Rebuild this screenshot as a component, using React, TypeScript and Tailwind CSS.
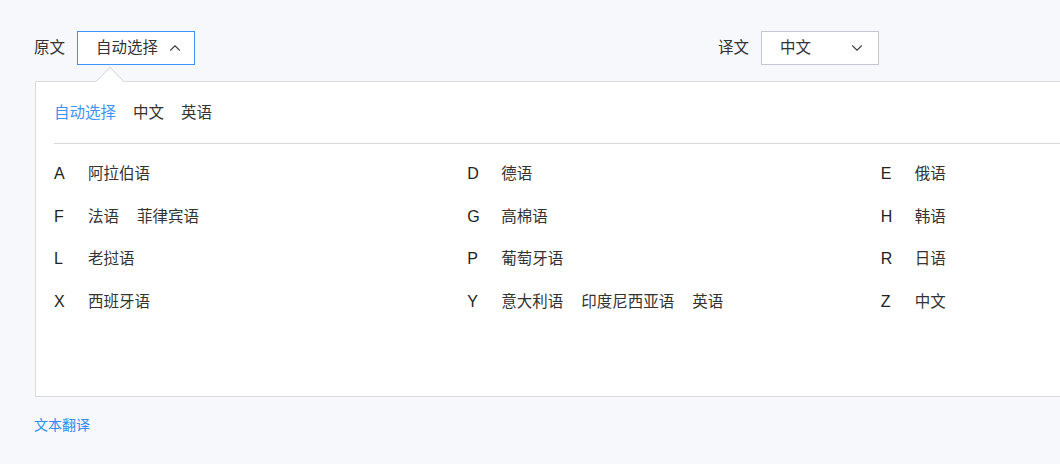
import { ChevronDown, ChevronUp } from 'lucide-react';

interface Group {
  letter: string;
  langs: string[];
}

const rows: Group[][] = [
  [
    { letter: 'A', langs: ['阿拉伯语'] },
    { letter: 'D', langs: ['德语'] },
    { letter: 'E', langs: ['俄语'] },
  ],
  [
    { letter: 'F', langs: ['法语', '菲律宾语'] },
    { letter: 'G', langs: ['高棉语'] },
    { letter: 'H', langs: ['韩语'] },
  ],
  [
    { letter: 'L', langs: ['老挝语'] },
    { letter: 'P', langs: ['葡萄牙语'] },
    { letter: 'R', langs: ['日语'] },
  ],
  [
    { letter: 'X', langs: ['西班牙语'] },
    { letter: 'Y', langs: ['意大利语', '印度尼西亚语', '英语'] },
    { letter: 'Z', langs: ['中文'] },
  ],
];

function LetterGroup({ letter, langs }: Group) {
  return (
    <div className="flex h-[42.5px] items-center">
      <span className="w-[34px] text-[16px] text-[#222]">{letter}</span>
      <div className="flex gap-[18px]">
        {langs.map((l) => (
          <span key={l} className="cursor-pointer text-[#333]">
            {l}
          </span>
        ))}
      </div>
    </div>
  );
}

export default function App() {
  return (
    <div
      className="h-[464px] w-[1060px] overflow-hidden bg-[#f7f8fc] pl-[34px] pt-[31px] text-[15.5px] leading-5"
      style={{ fontFamily: '"Liberation Sans", "Noto Sans CJK SC", sans-serif' }}
    >
      <div className="flex items-center">
        <span className="mr-[12px] text-[#333]">原文</span>
        <button className="flex h-[34px] w-[118px] items-center justify-between border border-[#3d94f6] bg-white pl-[18px] pr-[10px] text-[#333]">
          <span>自动选择</span>
          <ChevronUp size={18} strokeWidth={1.5} className="text-[#444]" />
        </button>
        <span className="ml-[523px] mr-[12px] text-[#333]">译文</span>
        <button className="flex h-[34px] w-[118px] items-center justify-between border border-[#c5c8d0] bg-white pl-[18px] pr-[12px] text-[#333]">
          <span>中文</span>
          <ChevronDown size={18} strokeWidth={1.5} className="text-[#444]" />
        </button>
      </div>

      <div className="relative ml-px mt-4 h-[316px] w-[1278px] border border-[#dcdcdc] bg-white px-[18px]">
        <div className="absolute -top-[11px] left-[64px] h-5 w-5 rotate-45 border-l border-t border-[#dcdcdc] bg-white" />
        <div className="flex gap-[17px] pt-[21px]">
          <span className="text-[#3d94f6]">自动选择</span>
          <span className="text-[#333]">中文</span>
          <span className="text-[#333]">英语</span>
        </div>
        <div className="mt-[20px] border-t border-[#d9d9d9]" />
        <div className="pt-[9px]">
          {rows.map((row, i) => (
            <div key={i} className="grid grid-cols-3">
              {row.map((g) => (
                <LetterGroup key={g.letter} {...g} />
              ))}
            </div>
          ))}
        </div>
      </div>

      <div className="mt-[18px] text-[14px] text-[#2a8cf0]">文本翻译</div>
    </div>
  );
}
